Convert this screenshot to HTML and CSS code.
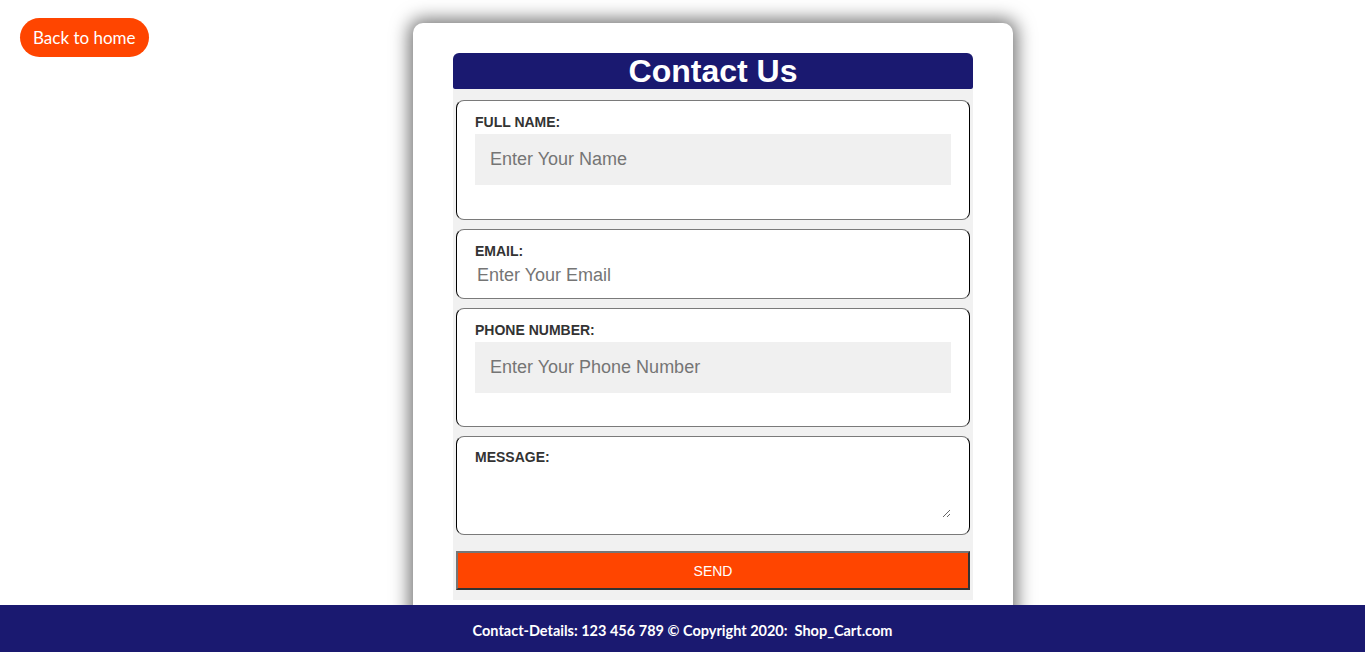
FILE: index.html
```html
<!DOCTYPE html>
<html lang="en">
<head>
<meta charset="utf-8">
<title>Contact Us</title>
<link rel="stylesheet" href="styles.css">
</head>
<body>
<a class="back-btn" href="#">Back to home</a>
<main class="page">
  <section class="card">
    <h1 class="card-title">Contact Us</h1>
    <form class="contact-form">
      <div class="field">
        <label class="field-label">FULL NAME:</label>
        <input class="field-input boxed" type="text" placeholder="Enter Your Name">
      </div>
      <div class="field">
        <label class="field-label">EMAIL:</label>
        <input class="field-input plain" type="email" placeholder="Enter Your Email">
      </div>
      <div class="field">
        <label class="field-label">PHONE NUMBER:</label>
        <input class="field-input boxed tight" type="tel" placeholder="Enter Your Phone Number">
      </div>
      <div class="field field-message">
        <label class="field-label">MESSAGE:</label>
        <textarea class="field-textarea"></textarea>
      </div>
      <button class="send-btn" type="button">SEND</button>
    </form>
    <div class="card-tail"></div>
  </section>
</main>
<footer class="site-footer">Contact-Details: 123 456 789 © Copyright 2020:&nbsp; Shop_Cart.com</footer>
</body>
</html>
```

FILE: styles.css
```css
html, body {
  margin: 0;
  padding: 0;
  background: #ffffff;
}
body {
  font-family: Arial, "Liberation Sans", sans-serif;
}
.back-btn {
  position: absolute;
  left: 20px;
  top: 18px;
  height: 39px;
  line-height: 39px;
  padding: 0 13px;
  border-radius: 20px;
  background: #ff4500;
  color: #ffffff;
  font-family: Lato, "Open Sans", sans-serif;
  font-size: 17px;
  text-decoration: none;
}
.page {
  display: flex;
  justify-content: center;
  padding: 23px 0 0 61px;
}
.card {
  width: 520px;
  padding: 30px 40px 40px;
  background: #ffffff;
  border-radius: 10px;
  box-shadow: 0 0 18px 4px rgba(0, 0, 0, 0.55);
}
.card-title {
  margin: 0;
  height: 36px;
  line-height: 36px;
  background: #1a1970;
  color: #ffffff;
  text-align: center;
  font-family: Arial, "Liberation Sans", sans-serif;
  font-weight: bold;
  font-size: 32px;
  border-radius: 6px 6px 2px 2px;
}
.contact-form {
  display: flex;
  flex-direction: column;
  gap: 9px;
  padding: 11px 3px 10px;
  background: #f1f1f1;
}
.field {
  display: flex;
  flex-direction: column;
  align-items: stretch;
  padding: 13px 18px 11px;
  background: #ffffff;
  border: 1px solid;
  border-color: #7a7a7a #000000 #7a7a7a #000000;
  border-radius: 8px;
}
.field-message {
  padding-top: 12px;
}
.field-label {
  display: block;
  height: 16px;
  line-height: 16px;
  font-size: 14px;
  font-weight: bold;
  color: #333333;
}
.field-input {
  margin: 4px 0 0;
  border: none;
  outline: none;
  font-family: Arial, "Liberation Sans", sans-serif;
  font-size: 18px;
  color: #333333;
  box-sizing: border-box;
}
.field-input::placeholder {
  color: #757575;
}
.field-input.boxed {
  height: 51px;
  margin-bottom: 23px;
  padding: 0 15px;
  background: #f0f0f0;
}
.field-input.boxed.tight {
  margin-bottom: 22px;
}
.field-input.plain {
  height: 24px;
  padding: 0 2px;
  background: transparent;
}
.field-textarea {
  margin: 4px 0 5px;
  height: 49px;
  border: none;
  outline: none;
  background: #ffffff;
  box-sizing: border-box;
  font-family: Arial, "Liberation Sans", sans-serif;
  font-size: 16px;
  resize: vertical;
}
.send-btn {
  margin-top: 7px;
  height: 39px;
  background: #ff4500;
  color: #ffffff;
  font-family: Arial, "Liberation Sans", sans-serif;
  font-size: 14px;
  border: 2px solid;
  border-color: #767676 #333333 #333333 #767676;
  cursor: pointer;
}
.card-tail {
  height: 20px;
}
.site-footer {
  position: fixed;
  left: 0;
  right: 0;
  bottom: 0;
  height: 47px;
  line-height: 52px;
  background: #1a1970;
  color: #ffffff;
  text-align: center;
  font-family: Lato, "Open Sans", sans-serif;
  font-weight: bold;
  font-size: 14.5px;
}
```
